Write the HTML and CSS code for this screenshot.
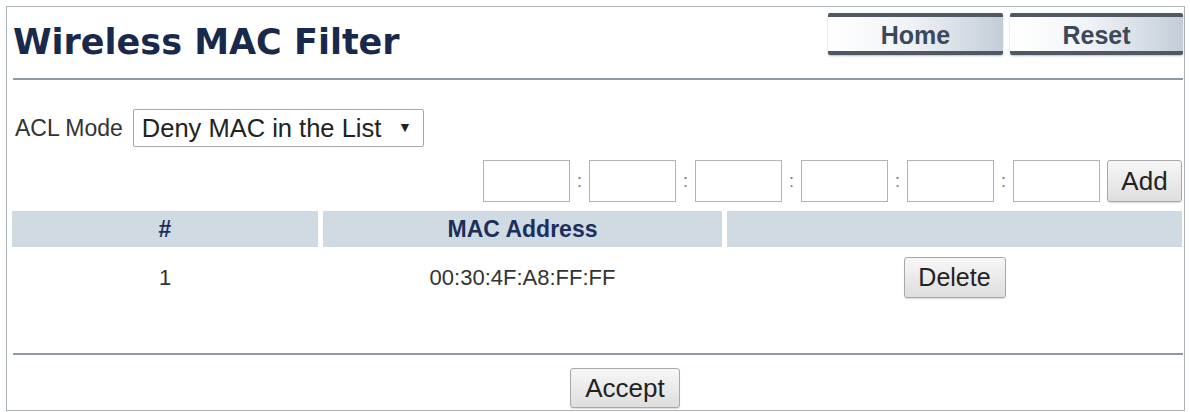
FILE: index.html
```html
<!DOCTYPE html>
<html lang="en">

<head>
	<meta charset="utf-8">
	<title>Wireless MAC Filter</title>
	<link rel="stylesheet" href="styles.css">
</head>

<body>
	<form class="panel" name="acl" method="post">
		<div class="top">
			<h1>Wireless MAC Filter</h1>
			<div class="nav">
				<button type="button" class="navbtn">Home</button>
				<button type="button" class="navbtn">Reset</button>
			</div>
		</div>

		<div class="mode">
			<label for="aclmode">ACL Mode</label>
			<span class="sel">
				<select id="aclmode" name="mode">
					<option value="0">Disable</option>
					<option value="1">Allow MAC in the List</option>
					<option value="2" selected>Deny MAC in the List</option>
				</select>
			</span>
		</div>

		<div class="macin">
			<input class="oct" name="m0" maxlength="2"><span class="col">:</span>
			<input class="oct" name="m1" maxlength="2"><span class="col">:</span>
			<input class="oct" name="m2" maxlength="2"><span class="col">:</span>
			<input class="oct" name="m3" maxlength="2"><span class="col">:</span>
			<input class="oct" name="m4" maxlength="2"><span class="col">:</span>
			<input class="oct" name="m5" maxlength="2">
			<button type="button" class="btn add">Add</button>
		</div>

		<div class="list">
			<div class="th">#</div>
			<div class="th">MAC Address</div>
			<div class="th"></div>

			<div class="td">1</div>
			<div class="td">00:30:4F:A8:FF:FF</div>
			<div class="td"><button type="button" class="btn del">Delete</button></div>
		</div>

		<div class="foot">
			<button type="submit" class="btn accept">Accept</button>
		</div>
	</form>
</body>

</html>
```

FILE: styles.css
```css
body {
	margin: 0;
	background: #fff;
	color: #222;
	font-family: "Liberation Sans", Arial, sans-serif;
}

.panel {
	display: block;
	margin: 6px 0 0 6px;
	width: 1169px;
	height: 403px;
	padding: 0 2px 0 6px;
	border: 1px solid #a9b1b9;
}

/* header: title + nav buttons */
.top {
	display: flex;
	justify-content: space-between;
	align-items: flex-start;
	height: 71px;
	border-bottom: 2px solid #8d9aa5;
	margin-right: -1px;
}

h1 {
	margin: 0;
	padding-top: 18px;
	font-family: "DejaVu Sans", Verdana, sans-serif;
	font-weight: bold;
	font-size: 35px;
	line-height: 35px;
	color: #18294b;
}

.nav {
	display: flex;
	gap: 7px;
	margin-top: 6px;
}

.navbtn {
	height: 42px;
	width: 175px;
	padding: 3px 0 0 0;
	border: none;
	border-top: 4px solid #4f5964;
	border-bottom: 4px solid #4f5964;
	border-radius: 2px;
	background: linear-gradient(to right, #fff 0%, #f1f4f7 45%, #c3cdd7 100%);
	box-shadow: 0 1px 2px rgba(0, 0, 0, 0.25);
	font-family: "Liberation Sans", Arial, sans-serif;
	font-weight: bold;
	font-size: 25px;
	color: #3b4959;
	cursor: pointer;
}

.navbtn + .navbtn {
	width: 173px;
}

/* acl mode */
.mode {
	display: flex;
	align-items: center;
	gap: 10px;
	margin-top: 29px;
	padding-left: 2px;
	font-size: 23px;
	color: #333;
}

.sel {
	position: relative;
	display: inline-block;
}

.sel select {
	appearance: none;
	-webkit-appearance: none;
	width: 291px;
	height: 38px;
	padding: 0 0 0 8px;
	border: 1px solid #a6a6a6;
	border-radius: 2px;
	background: #fff;
	font-family: "Liberation Sans", Arial, sans-serif;
	font-size: 25.5px;
	color: #222;
}

.sel::after {
	content: "\25BC";
	position: absolute;
	right: 12px;
	top: 10px;
	font-size: 14px;
	color: #222;
	pointer-events: none;
}

/* new mac entry */
.macin {
	display: flex;
	justify-content: flex-end;
	align-items: center;
	margin-top: 13px;
	height: 42px;
}

.oct {
	box-sizing: border-box;
	width: 87px;
	height: 42px;
	margin: 0;
	border: 1px solid #b3b3b3;
	font-size: 20px;
}

.col {
	width: 19px;
	text-align: center;
	font-size: 18px;
	color: #777;
}

.btn {
	box-sizing: border-box;
	padding: 0;
	border: 1px solid #a8a8a8;
	border-radius: 3px;
	background: linear-gradient(#f7f7f7, #dedede);
	box-shadow: 0 1px 1px rgba(0, 0, 0, 0.15);
	font-family: "Liberation Sans", Arial, sans-serif;
	font-size: 25px;
	color: #222;
	cursor: pointer;
}

.add {
	width: 75px;
	height: 42px;
	margin-left: 7px;
	font-size: 26px;
}

/* acl table */
.list {
	display: grid;
	grid-template-columns: 306px 399px 1fr;
	column-gap: 5px;
	margin: 9px 0 0 -1px;
}

.th {
	height: 36px;
	line-height: 36px;
	background: #cfdae3;
	text-align: center;
	font-weight: bold;
	font-size: 23px;
	color: #1c2f5c;
}

.td {
	display: flex;
	align-items: center;
	justify-content: center;
	height: 41px;
	margin: 10px 0 55px;
	font-size: 22px;
	color: #333;
}

.del {
	width: 102px;
	height: 41px;
}

/* bottom bar */
.foot {
	display: flex;
	justify-content: center;
	padding: 13px 0 0 54px;
	border-top: 2px solid #8d9aa5;
	margin-right: -1px;
}

.accept {
	width: 110px;
	height: 40px;
	font-size: 26px;
}
```
